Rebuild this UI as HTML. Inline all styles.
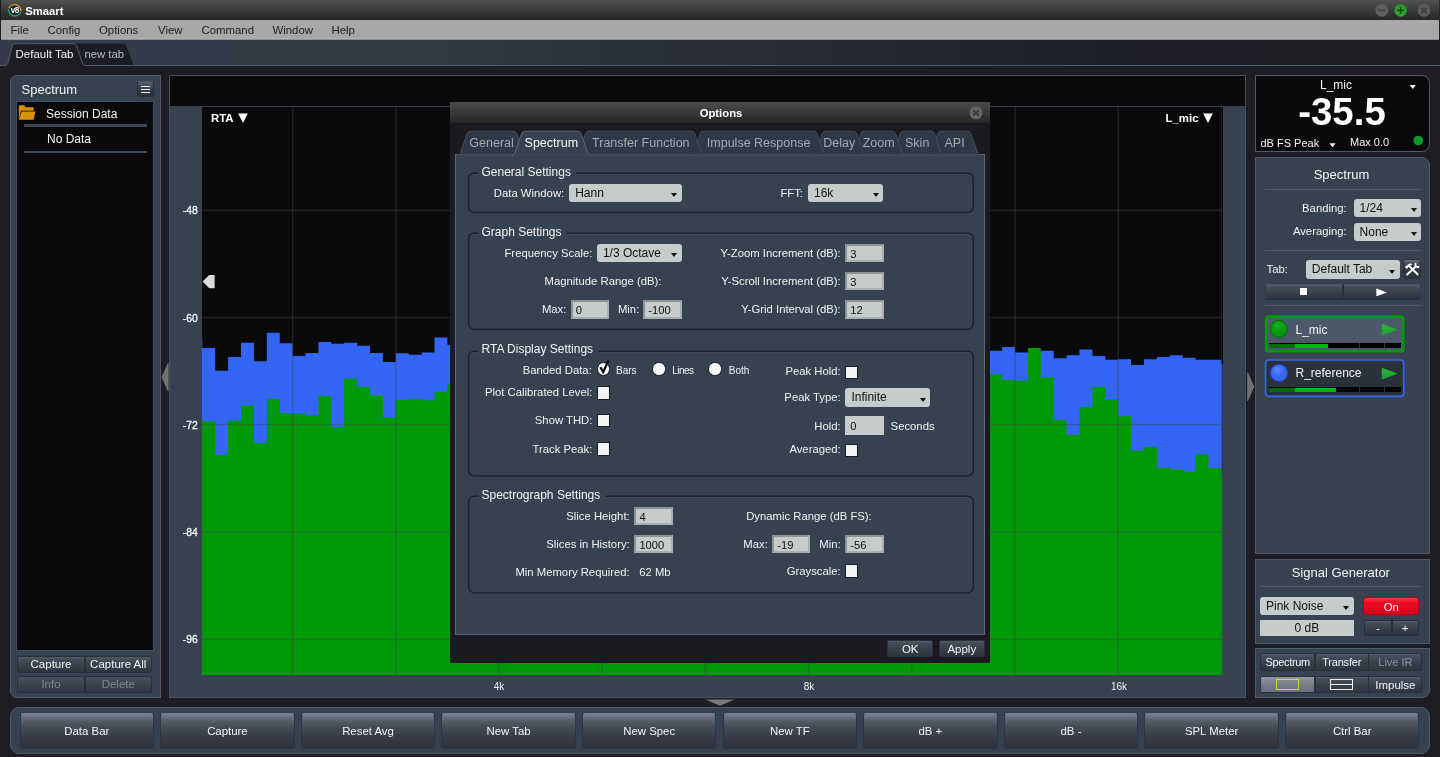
<!DOCTYPE html>
<html lang="en">
<head>
<meta charset="utf-8">
<title>Smaart</title>
<style>
*{box-sizing:border-box;margin:0;padding:0}
html,body{width:1440px;height:757px;overflow:hidden;background:#1d1d23}
body{position:relative;font-family:"Liberation Sans",sans-serif;font-size:11px;color:#f0f0f0;-webkit-font-smoothing:antialiased}
.a{position:absolute}
.t{position:absolute;white-space:nowrap;line-height:14px;height:14px}
.r{text-align:right}
.c{text-align:center}
/* top bars */
#title{left:0;top:0;width:1440px;height:20px;background:linear-gradient(#525252,#3c3c3c 45%,#262626);border-left:0.8px solid #1a1a1e;border-right:0.8px solid #2a2a2c}
#menu{left:0.8px;top:19.7px;width:1438.4px;height:20px;background:linear-gradient(#a8a8a8 0,#a7a7a7 88%,#b2b2b2 94%,#7a7a7a 100%)}
#menu span{position:absolute;top:3.4px;margin-left:-0.8px;font-size:11.4px;color:#1c1c1c;line-height:14px}
#tabbar{left:0;top:40px;width:1440px;height:26px;background:linear-gradient(90deg,#333c48 0,#323a46 400px,#262a33 800px,#1e1f26 1150px,#1d1d23)}
/* panels */
.panel{position:absolute;background:#36424f;border:1px solid #4d5b6b}
.btn{position:absolute;background:linear-gradient(#565d6b 0,#474e5b 12%,#3a414d 50%,#2f3540 100%);border:1px solid #2a2f39;border-radius:2px;color:#f4f4f4;text-align:center;font-size:11.5px}
.dd{position:absolute;background:#c6cccb;border-radius:3px;color:#111;font-size:12px;line-height:18px;padding-left:6px;height:18.7px}
.dd:after{content:"";position:absolute;right:4.5px;top:9.5px;border-left:3px solid transparent;border-right:3px solid transparent;border-top:4px solid #111}
.in{position:absolute;background:#c6cccb;border:2px solid #8e9493;border-right-color:#a9afae;border-bottom-color:#a9afae;color:#111;font-size:11.2px;line-height:16.4px;padding-left:3px;height:18.6px}
.cb{position:absolute;width:13.2px;height:13.2px;margin:-0.3px 0 0 -0.2px;background:#f3f3f3;border:1.2px solid #161b22}
.rd{position:absolute;width:12px;height:12px;border-radius:50%;background:#f8f8f8;border:1.3px solid #0e1217}
.hr{position:absolute;height:1px;background:#4d5b6b}
.lbl{position:absolute;white-space:nowrap;line-height:14px;height:14px;font-size:11.3px;color:#f2f2f2}
.grp{position:absolute;border:2px solid #1c242c;border-radius:6px;box-shadow:inset 0 0 0 0.5px rgba(80,95,112,.35), 0 1px 0 rgba(90,105,122,.35)}
.leg{position:absolute;white-space:nowrap;line-height:14px;height:14px;font-size:12px;color:#f4f4f4;background:#36424f;padding:0 4px}
.bb{top:712.6px;width:134.6px;height:36.6px;line-height:35.6px;font-size:11.4px;border-radius:3px;background:linear-gradient(#7c8290 0,#666c7a 10%,#4f5562 26%,#40464f 48%,#363b46 70%,#2f333d 100%);border:1px solid #30343e;border-top-color:#747a88}
</style>
</head>
<body>
<div id="app" class="a" style="left:0;top:0;width:1440px;height:757px;will-change:transform">
<!-- ===== title bar ===== -->
<div id="title" class="a">
  <svg class="a" style="left:5.6px;top:2.2px" width="16" height="16" viewBox="0 0 16 16">
    <circle cx="7.8" cy="7.8" r="6.3" fill="#1b2129"/>
    <path d="M1.6 7 A6.3 6.3 0 0 0 13.6 10.2" fill="none" stroke="#2a8f74" stroke-width="1.7"/>
    <path d="M1.9 6.2 A6.3 6.3 0 0 1 13.9 9.4" fill="none" stroke="#c9a12c" stroke-width="1.5"/>
    <text x="7.7" y="10.6" font-family="Liberation Sans,sans-serif" font-size="8.2" font-weight="bold" letter-spacing="-0.7" fill="#f4f4f4" text-anchor="middle">v8</text>
  </svg>
  <div class="t" style="left:24.2px;top:4px;font-weight:bold;font-size:11.3px;color:#fff">Smaart</div>
  <svg class="a" style="left:1372.1px;top:2px" width="62" height="16" viewBox="0 0 62 16">
    <defs><radialGradient id="gg" cx="50%" cy="55%" r="55%"><stop offset="0" stop-color="#58c058"/><stop offset="0.6" stop-color="#2ea22e"/><stop offset="1" stop-color="#1f8a1f"/></radialGradient></defs>
    <circle cx="8.8" cy="8.3" r="6.4" fill="#606060"/><rect x="5.3" y="7.5" width="7" height="1.7" fill="#3e3e3e"/>
    <circle cx="27.6" cy="8.3" r="6.4" fill="url(#gg)"/><path d="M24 8.3h7.2M27.6 4.7v7.2" stroke="#064a06" stroke-width="1.8"/>
    <circle cx="51" cy="8.3" r="6.4" fill="#5c5c5c"/><path d="M48.3 5.6l5.4 5.4M53.7 5.6l-5.4 5.4" stroke="#3c3c3c" stroke-width="1.9"/>
  </svg>
</div>
<!-- ===== menu bar ===== -->
<div id="menu" class="a">
  <span style="left:10.5px">File</span><span style="left:47.5px">Config</span><span style="left:99px">Options</span><span style="left:158px">View</span><span style="left:201.5px">Command</span><span style="left:272.5px">Window</span><span style="left:331.5px">Help</span>
</div>
<!-- ===== tab bar ===== -->
<div id="tabbar" class="a">
  <svg class="a" style="left:0;top:0" width="1440" height="27" viewBox="0 0 1440 27">
    <path d="M80 25.5 L84 25.5 C82 22 79 8 77 5.5 C76 4 75 3.4 73 3.4 L88 3.4 L122 3.4 C124.5 3.4 125.6 4.2 126.4 6.3 L133.6 25.5 Z" fill="#1c1d24"/>
    <path d="M0 25.5 L5 25.5 C7 25.5 7.6 24 8.2 22 L12 7 C12.8 4.5 13.8 3.7 16 3.7 L72.5 3.7 C75 3.7 76 4.5 76.8 7 L82 22 C82.8 24.5 83.5 25.5 86 25.5 L1440 25.5 L1440 27 L0 27 Z" fill="#1d1d23"/>
    <path d="M0 25.5 L5 25.5 C7 25.5 7.6 24 8.2 22 L12 7 C12.8 4.5 13.8 3.7 16 3.7 L72.5 3.7 C75 3.7 76 4.5 76.8 7 L82 22 C82.8 24.5 83.5 25.5 86 25.5 L1440 25.5" fill="none" stroke="#4d5b6b" stroke-width="1"/>
  </svg>
  <div class="t" style="left:15.5px;top:7px;font-size:11.5px;color:#f2f2f2">Default Tab</div>
  <div class="t" style="left:84.5px;top:7px;font-size:11.3px;color:#b8bcc2">new tab</div>
</div>

<!-- ===== left panel ===== -->
<div class="panel" style="left:10px;top:75px;width:150.5px;height:623px;border-radius:7px 0 0 7px"></div>
<div class="t" style="left:21.5px;top:83.4px;font-size:13px;color:#f4f4f4">Spectrum</div>
<div class="a" style="left:137px;top:80.5px;width:16.5px;height:16.5px;border-radius:3px;background:linear-gradient(#5c6270 0,#454a57 25%,#353a45 60%,#2d313b 100%);border:1px solid #2a2e38;border-top-color:#4c5260">
  <div class="a" style="left:3px;top:4px;width:8.8px;height:1.4px;background:#f0f0f0"></div>
  <div class="a" style="left:3px;top:7px;width:8.8px;height:1.4px;background:#f0f0f0"></div>
  <div class="a" style="left:3px;top:10px;width:8.8px;height:1.4px;background:#f0f0f0"></div>
</div>
<div class="a" style="left:17px;top:102.3px;width:136px;height:547.4px;background:#0a0a0a;box-shadow:0 0 0 1px #424f5d"></div>
<svg class="a" style="left:18px;top:104px" width="19" height="17" viewBox="0 0 19 17">
  <path d="M0.8 1.9 q0 -0.7 0.7 -0.7 h4.6 q0.6 0 0.8 0.6 l0.5 1.4 h7.6 q0.7 0 0.7 0.7 v2.8 h-12.6 l-2.3 8.6 z" fill="#d48c08"/>
  <path d="M3.8 7.4 h13.6 l-1.8 8.3 h-14.8 z" fill="#dc930c"/>
</svg>
<div class="t" style="left:46px;top:107.4px;font-size:12px;color:#f4f4f4">Session Data</div>
<div class="a" style="left:24px;top:124.3px;width:122.5px;height:2.5px;background:#3a4755"></div>
<div class="t" style="left:47px;top:131.5px;font-size:12px;color:#f4f4f4">No Data</div>
<div class="a" style="left:24px;top:150.5px;width:122.5px;height:2.5px;background:#3a4755"></div>
<div class="btn" style="left:17px;top:656px;width:68px;height:16.5px;line-height:14.5px;border-radius:2px 0 0 2px">Capture</div>
<div class="btn" style="left:84.5px;top:656px;width:67.5px;height:16.5px;line-height:14.5px;border-radius:0 2px 2px 0">Capture All</div>
<div class="btn" style="left:17px;top:676px;width:68px;height:16.5px;line-height:14.5px;color:#7d8792;background:linear-gradient(#48505d,#3a424e 50%,#323944);border-radius:2px 0 0 2px">Info</div>
<div class="btn" style="left:84.5px;top:676px;width:67.5px;height:16.5px;line-height:14.5px;color:#7d8792;background:linear-gradient(#48505d,#3a424e 50%,#323944);border-radius:0 2px 2px 0">Delete</div>
<!-- left collapse arrow -->
<svg class="a" style="left:161px;top:360px" width="8" height="34" viewBox="0 0 8 34"><path d="M7.1 3.4 L7.1 31 L1.1 17.1 Z" fill="#6e6e6e" stroke="#8e8e8e" stroke-width="0.6"/></svg>

<!-- ===== chart panel ===== -->
<div class="panel" style="left:168.9px;top:75px;width:1077.1px;height:623px;border-color:#445160"></div>
<div class="a" style="left:169.9px;top:76px;width:1075.1px;height:30px;background:#0a0a0a"></div>
<div class="a" style="left:202px;top:107px;width:1020.5px;height:568px;background:#0a0a0a"></div>
<svg class="a" style="left:0;top:0" width="1440" height="757" viewBox="0 0 1440 757">
<path d="M202 675 V339.7 H202.3 V348 H215.2 V370.8 H228.1 V357 H241 V342.8 H253.9 V361.2 H266.8 V332.8 H279.7 V343.3 H292.6 V356 H305.5 V353 H318.4 V342 H331.3 V343.8 H344.2 V342.7 H357.1 V345.7 H370 V353 H382.9 V362 H395.8 V353.3 H408.7 V354.7 H421.6 V352.5 H434.5 V337.5 H447.4 V344.72 H460.3 V347.92 H473.2 V341.33 H486.1 V358.36 H499 V355.3 H511.9 V350.73 H524.8 V343.45 H537.7 V344.29 H550.6 V356.58 H563.5 V356.01 H576.4 V346.2 H589.3 V354.64 H602.2 V357.6 H615.1 V352.12 H628 V350.12 H640.9 V349.47 H653.8 V358.69 H666.7 V350.95 H679.6 V358.18 H692.5 V357.65 H705.4 V350.17 H718.3 V351.98 H731.2 V343.23 H744.1 V356.25 H757 V340.93 H769.9 V345.61 H782.8 V349.42 H795.7 V359.95 H808.6 V348.26 H821.5 V352.65 H834.4 V347.12 H847.3 V346.41 H860.2 V358.09 H873.1 V341.23 H886 V355.3 H898.9 V344.75 H911.8 V343.55 H924.7 V340.86 H937.6 V357.92 H950.5 V354.7 H963.4 V340.36 H976.3 V359.32 H989.2 V350.8 H1002.1 V347 H1015 V352.5 H1027.9 V352 H1040.8 V350.8 H1053.7 V358.3 H1066.6 V355.3 H1079.5 V349.5 H1092.4 V356 H1105.3 V359.7 H1118.2 V359.2 H1131.1 V365 H1144 V359.2 H1156.9 V357 H1169.8 V355.3 H1182.7 V357.8 H1195.6 V359.7 H1208.5 V359.7 H1221.4 V364 H1222.5 V675 Z" fill="#3366f6"/>
<path d="M202 675 V418.3 H202.3 V421.3 H215.2 V455 H228.1 V420.7 H241 V405.8 H253.9 V443 H266.8 V399 H279.7 V413 H292.6 V413 H305.5 V415.3 H318.4 V396 H331.3 V427 H344.2 V378.7 H357.1 V387 H370 V396 H382.9 V417.5 H395.8 V400 H408.7 V399.2 H421.6 V400.3 H434.5 V391.7 H447.4 V384.13 H460.3 V386.2 H473.2 V396.06 H486.1 V412.02 H499 V388.88 H511.9 V391.07 H524.8 V384.25 H537.7 V417.1 H550.6 V412.27 H563.5 V387.74 H576.4 V405.08 H589.3 V414.19 H602.2 V383.47 H615.1 V406.87 H628 V387.11 H640.9 V383.57 H653.8 V414.62 H666.7 V392.01 H679.6 V402.89 H692.5 V413.92 H705.4 V396.56 H718.3 V397.24 H731.2 V392.2 H744.1 V381.73 H757 V405.05 H769.9 V401.38 H782.8 V393.71 H795.7 V387.82 H808.6 V388.11 H821.5 V391.05 H834.4 V409.88 H847.3 V402.34 H860.2 V384.04 H873.1 V389.15 H886 V404.62 H898.9 V393.24 H911.8 V398.36 H924.7 V407.89 H937.6 V418.19 H950.5 V418.39 H963.4 V391.56 H976.3 V411.01 H989.2 V374.2 H1002.1 V380 H1015 V380.8 H1027.9 V348 H1040.8 V377.2 H1053.7 V420 H1066.6 V435 H1079.5 V407.2 H1092.4 V387 H1105.3 V399 H1118.2 V416.2 H1131.1 V450.8 H1144 V447 H1156.9 V468 H1169.8 V470 H1182.7 V471.7 H1195.6 V454.5 H1208.5 V468 H1221.4 V475 H1222.5 V675 Z" fill="#009a08"/>
<rect x="291.9" y="107" width="1.4" height="568" fill="rgba(67,67,67,0.42)"/>
<rect x="395.1" y="107" width="1.4" height="568" fill="rgba(67,67,67,0.42)"/>
<rect x="498.3" y="107" width="1.4" height="568" fill="rgba(67,67,67,0.42)"/>
<rect x="601.5" y="107" width="1.4" height="568" fill="rgba(67,67,67,0.42)"/>
<rect x="704.7" y="107" width="1.4" height="568" fill="rgba(67,67,67,0.42)"/>
<rect x="807.9" y="107" width="1.4" height="568" fill="rgba(67,67,67,0.42)"/>
<rect x="911.1" y="107" width="1.4" height="568" fill="rgba(67,67,67,0.42)"/>
<rect x="1014.3" y="107" width="1.4" height="568" fill="rgba(67,67,67,0.42)"/>
<rect x="1117.5" y="107" width="1.4" height="568" fill="rgba(67,67,67,0.42)"/>
<rect x="1220.7" y="107" width="1.4" height="568" fill="rgba(67,67,67,0.42)"/>
<rect x="202" y="209.6" width="1020" height="1.4" fill="rgba(67,67,67,0.42)"/>
<rect x="202" y="316.9" width="1020" height="1.4" fill="rgba(67,67,67,0.42)"/>
<rect x="202" y="423.8" width="1020" height="1.4" fill="rgba(67,67,67,0.42)"/>
<rect x="202" y="531.6" width="1020" height="1.4" fill="rgba(67,67,67,0.42)"/>
<rect x="202" y="638.7" width="1020" height="1.4" fill="rgba(67,67,67,0.42)"/>
  <path d="M238.2 113.6 h9.6 l-4.8 9.4 z" fill="#fff"/>
  <path d="M1203.2 113.6 h9.6 l-4.8 9.4 z" fill="#fff"/>
  <path d="M214.6 275 v13.2 h-5.4 l-6.6 -6.6 l6.6 -6.6 z" fill="#dcdcdc"/>
  <path d="M705.5 699.5 h29 l-14.5 6.3 z" fill="#7a7a7a"/>
</svg>
<div class="t" style="left:211px;top:111px;font-size:11.4px;font-weight:bold;color:#fff">RTA</div>
<div class="t r" style="left:1140px;width:58.5px;top:111px;font-size:11.4px;font-weight:bold;color:#fff">L_mic</div>
<div class="t r" style="left:170px;width:27.8px;top:204.3px;font-size:10.4px;-webkit-text-stroke:0.3px #f6f6f6;color:#f6f6f6">-48</div>
<div class="t r" style="left:170px;width:27.8px;top:311.5px;font-size:10.4px;-webkit-text-stroke:0.3px #f6f6f6;color:#f6f6f6">-60</div>
<div class="t r" style="left:170px;width:27.8px;top:418.7px;font-size:10.4px;-webkit-text-stroke:0.3px #f6f6f6;color:#f6f6f6">-72</div>
<div class="t r" style="left:170px;width:27.8px;top:526.1px;font-size:10.4px;-webkit-text-stroke:0.3px #f6f6f6;color:#f6f6f6">-84</div>
<div class="t r" style="left:170px;width:27.8px;top:633.3px;font-size:10.4px;-webkit-text-stroke:0.3px #f6f6f6;color:#f6f6f6">-96</div>
<div class="t c" style="left:479px;width:40px;top:680px;font-size:10px;color:#f0f0f0">4k</div>
<div class="t c" style="left:789px;width:40px;top:680px;font-size:10px;color:#f0f0f0">8k</div>
<div class="t c" style="left:1099px;width:40px;top:680px;font-size:10px;color:#f0f0f0">16k</div>
<!-- right collapse arrow -->
<svg class="a" style="left:1247px;top:372px" width="8" height="30" viewBox="0 0 8 30"><path d="M0.7 0.8 L0.7 28.8 L6.7 14.8 Z" fill="#6e6e6e" stroke="#8e8e8e" stroke-width="0.6"/></svg>

<!-- ===== right: meter ===== -->
<div class="a" style="left:1255px;top:75px;width:175px;height:76.5px;background:#0a0a0a;border:1px solid #4d5b6b;border-radius:0 8px 8px 0"></div>
<div class="t c" style="left:1296px;width:80px;top:77.5px;font-size:12px;color:#f4f4f4">L_mic</div>
<div class="t c" style="left:1272px;width:140px;top:90px;height:44px;line-height:44px;font-size:38.4px;font-weight:bold;color:#fff">-35.5</div>
<div class="t" style="left:1260.5px;top:136px;font-size:11px;color:#f4f4f4">dB FS Peak</div>
<div class="t" style="left:1350px;top:134.5px;font-size:11px;color:#f4f4f4">Max 0.0</div>
<svg class="a" style="left:1255px;top:75px" width="176" height="77" viewBox="0 0 176 77">
  <path d="M154.6 10 h6.4 l-3.2 4 z" fill="#f4f4f4"/>
  <path d="M74.4 68.2 h6.2 l-3.1 4 z" fill="#f4f4f4"/>
  <circle cx="163.3" cy="65.5" r="4.8" fill="#0a9a30"/>
</svg>
<!-- ===== right: spectrum panel ===== -->
<div class="panel" style="left:1255px;top:156.5px;width:175px;height:397.5px;border-radius:0 8px 0 0"></div>
<div class="t c" style="left:1290px;width:103px;top:167.5px;font-size:13px;color:#f4f4f4">Spectrum</div>
<div class="hr" style="left:1264.5px;top:189.3px;width:156px"></div>
<div class="lbl r" style="left:1280px;width:66.7px;top:201px">Banding:</div>
<div class="dd" style="left:1353.6px;top:198.8px;width:67.8px">1/24</div>
<div class="lbl r" style="left:1280px;width:66.7px;top:224.3px">Averaging:</div>
<div class="dd" style="left:1353.6px;top:222.5px;width:67.8px">None</div>
<div class="hr" style="left:1264.5px;top:250px;width:156px"></div>
<div class="lbl" style="left:1266.5px;top:261.5px">Tab:</div>
<div class="dd" style="left:1305.8px;top:260px;width:94px">Default Tab</div>
<div class="a" style="left:1403.7px;top:260.3px;width:16.8px;height:17.6px;background:linear-gradient(#6a707c 0,#4a505c 18%,#353a46 40%,#2d323d 100%);border-radius:2px;box-shadow:0 0 0 0.7px #2a2f39"></div>
<svg class="a" style="left:1404px;top:261px" width="16.3" height="17" viewBox="0 0 17 17.7">
  <path d="M6 5.8 L14.1 13.8" stroke="#fff" stroke-width="2.1" stroke-linecap="round"/>
  <path d="M0.9 6.3 L5.4 2.8 C6.5 2.1 7.9 2.5 8.5 3.9 L7.4 4.5 C7.1 4 6.6 4 6.3 4.3 L2.9 8.4 Z" fill="#fff"/>
  <path d="M3.3 14.1 L12.4 5.6" stroke="#fff" stroke-width="2.1" stroke-linecap="round"/>
  <path d="M12.6 2.3 A2.35 2.35 0 0 0 15.95 5.65" fill="none" stroke="#fff" stroke-width="1.9"/>
</svg>
<div class="btn" style="left:1264.5px;top:284px;width:78.5px;height:15.8px;border-radius:2px 0 0 2px;border-color:#4a515e #2c313b #2a2f38 #333944"></div>
<div class="btn" style="left:1342.5px;top:284px;width:78.5px;height:15.8px;border-radius:0 2px 2px 0;border-color:#4a515e #333944 #2a2f38 #2c313b"></div>
<div class="a" style="left:1299.5px;top:288px;width:7.5px;height:7.4px;background:#fff"></div>
<svg class="a" style="left:1376px;top:287.5px" width="12" height="9" viewBox="0 0 12 9"><path d="M0.4 0.6 L11 4.4 L0.4 8.2 z" fill="#fff"/></svg>
<div class="hr" style="left:1264.5px;top:305.4px;width:156px"></div>
<!-- L_mic -->
<svg class="a" style="left:1263px;top:314px" width="144" height="40"><rect x="3.15" y="2.55" width="137" height="34.7" rx="2.6" fill="#4b596a" stroke="#009c06" stroke-width="2.7"/></svg>
<div class="a" style="left:1269.6px;top:320.2px;width:18px;height:18px;border-radius:50%;background:radial-gradient(circle at 40% 30%,#16b41c 0,#089c10 45%,#058a0c 100%);border:1px solid #056a08"></div>
<div class="t" style="left:1295.5px;top:322.5px;font-size:12px;color:#f4f4f4">L_mic</div>
<svg class="a" style="left:1381px;top:322.5px" width="18" height="14" viewBox="0 0 18 14"><path d="M0.8 0.8 L16.6 6.8 L0.8 12.6 z" fill="#1fa82a"/><path d="M0.8 0.8 L16.6 6.8 L0.8 6.8 z" fill="#2bb838" opacity=".55"/></svg>
<div class="a" style="left:1268.8px;top:343.2px;width:131.8px;height:5px;background:#000"></div>
<div class="a" style="left:1269.3px;top:343.7px;width:26px;height:4px;background:#006a04"></div>
<div class="a" style="left:1295.3px;top:343.7px;width:33px;height:4px;background:#08b410"></div>
<div class="a" style="left:1359.3px;top:343.2px;width:1px;height:5px;background:#353535"></div>
<div class="a" style="left:1384.3px;top:343.2px;width:1px;height:5px;background:#353535"></div>
<!-- R_reference -->
<svg class="a" style="left:1263px;top:357px" width="144" height="42"><rect x="2.55" y="3.0" width="138.2" height="36.3" rx="3" fill="#2a313c" stroke="#3366f6" stroke-width="1.7"/></svg>
<div class="a" style="left:1269.6px;top:364px;width:18px;height:18px;border-radius:50%;background:radial-gradient(circle at 40% 28%,#5b86ff 0,#3a6af8 40%,#2f5fee 100%);border:1px solid #2448c8"></div>
<div class="t" style="left:1295.5px;top:366.3px;font-size:12px;color:#f4f4f4">R_reference</div>
<svg class="a" style="left:1381px;top:366.5px" width="18" height="14" viewBox="0 0 18 14"><path d="M0.8 0.8 L16.6 6.8 L0.8 12.6 z" fill="#1fa82a"/><path d="M0.8 0.8 L16.6 6.8 L0.8 6.8 z" fill="#2bb838" opacity=".55"/></svg>
<div class="a" style="left:1268.8px;top:387.2px;width:131.8px;height:5px;background:#000"></div>
<div class="a" style="left:1269.3px;top:387.7px;width:26px;height:4px;background:#006a04"></div>
<div class="a" style="left:1295.3px;top:387.7px;width:40.5px;height:4px;background:#08b410"></div>
<div class="a" style="left:1359.3px;top:387.2px;width:1px;height:5px;background:#353535"></div>
<div class="a" style="left:1384.3px;top:387.2px;width:1px;height:5px;background:#353535"></div>
<!-- ===== signal generator ===== -->
<div class="panel" style="left:1255px;top:559px;width:175px;height:84.5px"></div>
<div class="t c" style="left:1280px;width:121.6px;top:565.8px;font-size:13px;color:#f4f4f4">Signal Generator</div>
<div class="hr" style="left:1260px;top:585.8px;width:160.5px"></div>
<div class="dd" style="left:1260px;top:596.6px;width:93.8px">Pink Noise</div>
<div class="a c" style="left:1363.3px;top:597.4px;width:56px;height:17.8px;line-height:18px;border-radius:3px;background:linear-gradient(#f23a4a 0,#ea0a24 30%,#dc0018 100%);border:1px solid #b00016;font-size:11.4px;color:#fff">On</div>
<div class="a c" style="left:1260px;top:620.3px;width:93.8px;height:16px;line-height:17.4px;background:#c6cccb;font-size:12px;color:#111">0 dB</div>
<div class="btn" style="left:1364px;top:620px;width:28px;height:16.4px;line-height:14px;border-radius:2px 0 0 2px">-</div>
<div class="btn" style="left:1391.5px;top:620px;width:27px;height:16.4px;line-height:14px;border-radius:0 2px 2px 0">+</div>
<!-- ===== mode panel ===== -->
<div class="panel" style="left:1255px;top:648px;width:175px;height:50px;border-radius:0 0 8px 0"></div>
<div class="btn" style="left:1260.3px;top:653.4px;width:54.8px;height:17.2px;line-height:16.2px;font-size:11px;letter-spacing:-0.35px;border-radius:2px 0 0 2px">Spectrum</div>
<div class="btn" style="left:1314.6px;top:653.4px;width:54.2px;height:17.2px;line-height:16.2px;font-size:11px;letter-spacing:-0.2px;border-radius:0">Transfer</div>
<div class="btn" style="left:1368.3px;top:653.4px;width:54.2px;height:17.2px;line-height:16.2px;font-size:11px;color:#8791a0;border-radius:0 2px 2px 0">Live IR</div>
<div class="btn" style="left:1260.3px;top:676px;width:54.8px;height:17.2px;background:linear-gradient(#9298a3 0,#7c828e 40%,#686e7a 100%);border-radius:2px 0 0 2px"></div>
<div class="btn" style="left:1314.6px;top:676px;width:54.2px;height:17.2px;border-radius:0"></div>
<div class="btn" style="left:1368.3px;top:676px;width:54.2px;height:17.2px;line-height:16.2px;font-size:11.5px;border-radius:0 2px 2px 0">Impulse</div>
<div class="a" style="left:1275.6px;top:679.2px;width:23.6px;height:10.8px;border:1.1px solid #d6d62c"></div>
<div class="a" style="left:1329.8px;top:679.2px;width:23.4px;height:10.8px;border:1.1px solid #f0f0f0"></div>
<div class="a" style="left:1329.8px;top:684.1px;width:23.4px;height:1.1px;background:#f0f0f0"></div>

<!-- ===== bottom bar ===== -->
<div class="panel" style="left:10px;top:707px;width:1420px;height:46.9px;border-radius:9px"></div>
<div class="btn bb" style="left:19.5px">Data Bar</div>
<div class="btn bb" style="left:160.1px">Capture</div>
<div class="btn bb" style="left:300.7px">Reset Avg</div>
<div class="btn bb" style="left:441.3px">New Tab</div>
<div class="btn bb" style="left:581.9px">New Spec</div>
<div class="btn bb" style="left:722.5px">New TF</div>
<div class="btn bb" style="left:863.1px">dB +</div>
<div class="btn bb" style="left:1003.7px">dB -</div>
<div class="btn bb" style="left:1144.3px">SPL Meter</div>
<div class="btn bb" style="left:1284.9px">Ctrl Bar</div>

<!-- ===== options dialog ===== -->
<div class="a" style="left:450.2px;top:101.5px;width:540.1px;height:561.2px;background:#1b1a20"></div>
<div class="a" style="left:450.2px;top:101.5px;width:540.1px;height:21.6px;background:linear-gradient(#4c4c4c 0,#3c3c3c 40%,#272727 100%)"></div>
<div class="t c" style="left:671px;width:100px;top:106px;font-size:11.3px;font-weight:bold;color:#fff">Options</div>
<svg class="a" style="left:968px;top:104.5px" width="16" height="16" viewBox="0 0 16 16"><circle cx="8" cy="7.8" r="6.5" fill="#666"/><path d="M5.3 5.1l5.4 5.4M10.7 5.1l-5.4 5.4" stroke="#383838" stroke-width="1.9"/></svg>
<div class="a" style="left:455px;top:154.3px;width:530.2px;height:480.3px;background:#36424f;border:1px solid #5a6979"></div>
<svg class="a" style="left:0;top:0" width="1440" height="757" viewBox="0 0 1440 757">
<path d="M928.3 154.8 Q930.5 154.8 931.2 152.7 L937.6 133.9 Q938.5 131.2 941.3 131.2 L967.3 131.2 Q970.1 131.2 971 133.9 L977.4 152.7 Q978.1 154.8 980.3 154.8 Z" fill="#2e3945" stroke="#414e5c" stroke-width="1"/>
<path d="M890.8 154.8 Q893 154.8 893.7 152.7 L900.1 133.9 Q901 131.2 903.8 131.2 L930.9 131.2 Q933.7 131.2 934.6 133.9 L941 152.7 Q941.7 154.8 943.9 154.8 Z" fill="#2e3945" stroke="#414e5c" stroke-width="1"/>
<path d="M851.3 154.8 Q853.5 154.8 854.2 152.7 L860.6 133.9 Q861.5 131.2 864.3 131.2 L892 131.2 Q894.8 131.2 895.7 133.9 L902.1 152.7 Q902.8 154.8 905 154.8 Z" fill="#2e3945" stroke="#414e5c" stroke-width="1"/>
<path d="M812.8 154.8 Q815 154.8 815.7 152.7 L822.1 133.9 Q823 131.2 825.8 131.2 L853.2 131.2 Q856 131.2 856.9 133.9 L863.3 152.7 Q864 154.8 866.2 154.8 Z" fill="#2e3945" stroke="#414e5c" stroke-width="1"/>
<path d="M690.8 154.8 Q693 154.8 693.7 152.7 L700.1 133.9 Q701 131.2 703.8 131.2 L813.4 131.2 Q816.2 131.2 817.1 133.9 L823.5 152.7 Q824.2 154.8 826.4 154.8 Z" fill="#2e3945" stroke="#414e5c" stroke-width="1"/>
<path d="M576.1 154.8 Q578.3 154.8 579 152.7 L585.4 133.9 Q586.3 131.2 589.1 131.2 L691.2 131.2 Q694 131.2 694.9 133.9 L701.3 152.7 Q702 154.8 704.2 154.8 Z" fill="#2e3945" stroke="#414e5c" stroke-width="1"/>
<path d="M457.6 154.8 Q459.8 154.8 460.5 152.7 L466.9 133.9 Q467.8 131.2 470.6 131.2 L513.2 131.2 Q516 131.2 516.9 133.9 L523.3 152.7 Q524 154.8 526.2 154.8 Z" fill="#2e3945" stroke="#414e5c" stroke-width="1"/>
<path d="M512.2 154.8 Q514.4 154.8 515.1 152.7 L521.5 133.9 Q522.4 131.2 525.2 131.2 L577.4 131.2 Q580.2 131.2 581.1 133.9 L587.5 152.7 Q588.2 154.8 590.4 154.8 Z" fill="#36424f" stroke="#5a6979" stroke-width="1"/>
<rect x="513.4" y="154.2" width="75.8" height="1.6" fill="#36424f"/>
</svg>
<div class="t c" style="left:421.6px;width:140px;top:136.3px;font-size:12.5px;color:#a3abb4">General</div>
<div class="t c" style="left:481.29999999999995px;width:140px;top:136.3px;font-size:12.5px;color:#f6f6f6">Spectrum</div>
<div class="t c" style="left:570.8px;width:140px;top:136.3px;font-size:12.5px;color:#a3abb4">Transfer Function</div>
<div class="t c" style="left:688.6px;width:140px;top:136.3px;font-size:12.5px;color:#a3abb4">Impulse Response</div>
<div class="t c" style="left:769.3px;width:140px;top:136.3px;font-size:12.5px;color:#a3abb4">Delay</div>
<div class="t c" style="left:808.7px;width:140px;top:136.3px;font-size:12.5px;color:#a3abb4">Zoom</div>
<div class="t c" style="left:847.2px;width:140px;top:136.3px;font-size:12.5px;color:#a3abb4">Skin</div>
<div class="t c" style="left:884.6px;width:140px;top:136.3px;font-size:12.5px;color:#a3abb4">API</div>
<svg class="a" style="left:466px;top:171.2px" width="508.6" height="43.4"><rect x="2.7" y="3.1" width="504.4" height="39.0" rx="5.5" fill="none" stroke="rgba(95,112,130,.28)" stroke-width="1.2"/><rect x="2.6" y="2.2" width="504.6" height="39.4" rx="5.5" fill="none" stroke="#1b232b" stroke-width="1.5"/></svg>
<div class="leg" style="left:477.5px;top:165.1px;width:98px">General Settings</div>
<div class="lbl r" style="left:364.2px;width:200px;top:186.0px">Data Window:</div>
<div class="dd" style="left:569.2px;top:183.8px;width:112.5px">Hann</div>
<div class="lbl r" style="left:603.0px;width:200px;top:186.0px">FFT:</div>
<div class="dd" style="left:808px;top:183.8px;width:75.4px">16k</div>
<svg class="a" style="left:466px;top:231.4px" width="508.6" height="100.2"><rect x="2.7" y="3.1" width="504.4" height="95.8" rx="5.5" fill="none" stroke="rgba(95,112,130,.28)" stroke-width="1.2"/><rect x="2.6" y="2.2" width="504.6" height="96.2" rx="5.5" fill="none" stroke="#1b232b" stroke-width="1.5"/></svg>
<div class="leg" style="left:477.5px;top:225.3px;width:89px">Graph Settings</div>
<div class="lbl r" style="left:392.4px;width:200px;top:246.1px">Frequency Scale:</div>
<div class="dd" style="left:596.9px;top:243.8px;width:84.8px">1/3 Octave</div>
<div class="lbl" style="left:544.6px;top:273.8px;">Magnitude Range (dB):</div>
<div class="lbl r" style="left:366.4px;width:200px;top:302.3px">Max:</div>
<div class="in" style="left:570.8px;top:300.2px;width:38.2px;">0</div>
<div class="lbl r" style="left:439.3px;width:200px;top:302.3px">Min:</div>
<div class="in" style="left:643.3px;top:300.2px;width:38.4px;">-100</div>
<div class="lbl r" style="left:640.7px;width:200px;top:246.1px">Y-Zoom Increment (dB):</div>
<div class="in" style="left:845.2px;top:243.6px;width:38.6px;">3</div>
<div class="lbl r" style="left:640.7px;width:200px;top:274.1px">Y-Scroll Increment (dB):</div>
<div class="in" style="left:845.2px;top:271.6px;width:38.6px;">3</div>
<div class="lbl r" style="left:640.7px;width:200px;top:302.3px">Y-Grid Interval (dB):</div>
<div class="in" style="left:845.2px;top:300.2px;width:38.6px;">12</div>
<svg class="a" style="left:466px;top:348.5px" width="508.6" height="128.7"><rect x="2.7" y="3.1" width="504.4" height="124.3" rx="5.5" fill="none" stroke="rgba(95,112,130,.28)" stroke-width="1.2"/><rect x="2.6" y="2.2" width="504.6" height="124.7" rx="5.5" fill="none" stroke="#1b232b" stroke-width="1.5"/></svg>
<div class="leg" style="left:477.5px;top:342.4px;width:120.5px">RTA Display Settings</div>
<div class="lbl r" style="left:391.8px;width:200px;top:363.4px">Banded Data:</div>
<div class="rd" style="left:596.5px;top:362.4px;width:13.2px;height:13.2px"></div>
<div class="rd" style="left:652.4px;top:362.4px;width:13.2px;height:13.2px"></div>
<div class="rd" style="left:708.4px;top:362.4px;width:13.2px;height:13.2px"></div>
<svg class="a" style="left:596px;top:358px" width="16" height="18" viewBox="0 0 16 18"><path d="M4.4 9.2 L7.2 14 L12.6 2.2" fill="none" stroke="#0a0a0a" stroke-width="2.2" stroke-linejoin="miter"/></svg>
<div class="lbl" style="left:616px;top:364.4px;font-size:10px">Bars</div>
<div class="lbl" style="left:672.3px;top:364.4px;font-size:10px;letter-spacing:-0.55px">Lines</div>
<div class="lbl" style="left:728.8px;top:364.4px;font-size:10px">Both</div>
<div class="lbl r" style="left:392.4px;width:200px;top:385.0px">Plot Calibrated Level:</div>
<div class="cb" style="left:597.3px;top:386.7px"></div>
<div class="lbl r" style="left:392.4px;width:200px;top:413.2px">Show THD:</div>
<div class="cb" style="left:597.3px;top:414.6px"></div>
<div class="lbl r" style="left:392.4px;width:200px;top:441.5px">Track Peak:</div>
<div class="cb" style="left:597.3px;top:442.7px"></div>
<div class="lbl r" style="left:640.7px;width:200px;top:363.8px">Peak Hold:</div>
<div class="cb" style="left:845.3px;top:365.8px"></div>
<div class="lbl r" style="left:640.7px;width:200px;top:390.2px">Peak Type:</div>
<div class="dd" style="left:845.4px;top:388.1px;width:84.8px">Infinite</div>
<div class="lbl r" style="left:640.7px;width:200px;top:419.0px">Hold:</div>
<div class="in" style="left:845.2px;top:416.3px;width:38.6px;border-color:#c6cccb;">0</div>
<div class="lbl" style="left:890.6px;top:419.0px;">Seconds</div>
<div class="lbl r" style="left:640.7px;width:200px;top:441.9px">Averaged:</div>
<div class="cb" style="left:845.3px;top:443.8px"></div>
<svg class="a" style="left:466px;top:493.7px" width="508.6" height="100.7"><rect x="2.7" y="3.1" width="504.4" height="96.3" rx="5.5" fill="none" stroke="rgba(95,112,130,.28)" stroke-width="1.2"/><rect x="2.6" y="2.2" width="504.6" height="96.7" rx="5.5" fill="none" stroke="#1b232b" stroke-width="1.5"/></svg>
<div class="leg" style="left:477.5px;top:487.6px;width:128px">Spectrograph Settings</div>
<div class="lbl r" style="left:429.7px;width:200px;top:509.0px">Slice Height:</div>
<div class="in" style="left:634.4px;top:506.6px;width:38.5px;">4</div>
<div class="lbl r" style="left:429.7px;width:200px;top:537.1px">Slices in History:</div>
<div class="in" style="left:634.4px;top:534.6px;width:38.5px;">1000</div>
<div class="lbl r" style="left:429.7px;width:200px;top:565.2px">Min Memory Required:</div>
<div class="lbl" style="left:639.2px;top:565.2px;">62 Mb</div>
<div class="lbl" style="left:746.2px;top:509.0px;">Dynamic Range (dB FS):</div>
<div class="lbl r" style="left:567.8px;width:200px;top:537.1px">Max:</div>
<div class="in" style="left:772.3px;top:534.6px;width:37.7px;">-19</div>
<div class="lbl r" style="left:640.7px;width:200px;top:537.1px">Min:</div>
<div class="in" style="left:845.2px;top:534.6px;width:38.6px;">-56</div>
<div class="lbl r" style="left:640.7px;width:200px;top:563.6px">Grayscale:</div>
<div class="cb" style="left:845.3px;top:564.7px"></div>
<div class="btn" style="left:887px;top:640.2px;width:46.4px;height:16.8px;line-height:16.6px;font-size:11.5px">OK</div>
<div class="btn" style="left:938.5px;top:640.2px;width:46.6px;height:16.8px;line-height:16.6px;font-size:11.5px">Apply</div>

</div>
</body>
</html>
